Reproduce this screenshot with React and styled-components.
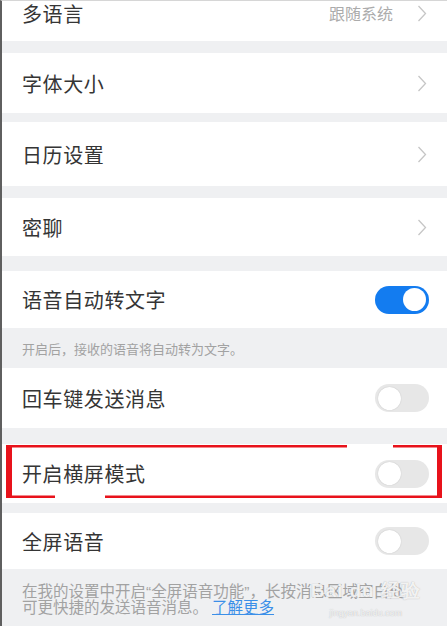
import React from 'react';
import styled, {createGlobalStyle} from 'styled-components';

const GlobalStyle = createGlobalStyle`
    html, body {
        margin: 0;
        padding: 0;
        background: #eff0f2;
    }
    * {
        box-sizing: border-box;
    }
`

const Screen = styled.div`
    width: 447px;
    height: 626px;
    overflow: hidden;
    background: #eff0f2;
    border-left: 2px solid #5f5f5f;
    border-top: 1px solid #d6d6d6;
    font-family: "Noto Sans CJK SC", "Noto Sans", sans-serif;
    display: flex;
    flex-direction: column;
`

const Row = styled.div`
    position: relative;
    flex: none;
    display: flex;
    align-items: center;
    justify-content: space-between;
    height: ${p => p.$h}px;
    margin-top: ${p => p.$gap || 0}px;
    padding: 0 18px 0 20px;
    background: #fff;
`

const Label = styled.span`
    font-size: 20px;
    letter-spacing: 0.6px;
    color: #353535;
`

const Side = styled.div`
    display: flex;
    align-items: center;
    gap: 24px;
    padding-right: 2px;
`

const Value = styled.span`
    font-size: 16px;
    color: #ababab;
`

const Hint = styled.div`
    flex: none;
    height: ${p => p.$h}px;
    display: flex;
    flex-direction: column;
    justify-content: ${p => p.$top ? 'flex-start' : 'center'};
    padding: ${p => p.$top ? '13px 20px 0' : '0 20px'};
    font-size: ${p => p.$size}px;
    color: #a2a2a2;
    position: relative;

    a {
        color: #3b8fe8;
        text-decoration: underline;
        margin-left: 4px;
    }
`

const Line = styled.div`
    height: 16px;
    line-height: 16px;
    white-space: nowrap;
`

const Quote = styled.span`
    font-family: "Liberation Sans", sans-serif;
`

const Toggle = styled.span`
    width: 54px;
    height: 28px;
    border-radius: 14px;
    background: ${p => p.$on ? '#137cf0' : '#e7e7e7'};
    display: flex;
    align-items: center;
    justify-content: ${p => p.$on ? 'flex-end' : 'flex-start'};
    padding: 0 3px;

    &::after {
        content: '';
        width: 23px;
        height: 23px;
        border-radius: 50%;
        background: #fff;
        box-shadow: ${p => p.$on ? 'none' : '0 0 1px rgba(0,0,0,0.25)'};
    }
`

const Mark = styled.svg`
    position: absolute;
    left: 4px;
    top: 1px;
    pointer-events: none;
`

const Watermark = styled.div`
    position: absolute;
    right: 26px;
    top: 9px;
    display: flex;
    flex-direction: column;
    align-items: center;
    color: rgba(255, 255, 255, 0.85);
    text-shadow: 0 0 1px rgba(120, 120, 120, 0.6);
    font-family: "Liberation Sans", sans-serif;

    b {
        font-size: 19px;
        font-weight: bold;
        letter-spacing: 1px;
    }
    small {
        font-size: 9px;
        margin-top: 4px;
    }
`

const Chevron = () => (
    <svg width="10" height="17" viewBox="0 0 10 17">
        <polyline points="1.5,1 8.5,8.5 1.5,16" fill="none" stroke="#c6c6c6" strokeWidth="1.3"/>
    </svg>
)

const rows = [
    {label: '多语言', h: 56, gap: -16, value: '跟随系统', arrow: true},
    {label: '字体大小', h: 60, gap: 12, arrow: true},
    {label: '日历设置', h: 64, gap: 9, arrow: true},
    {label: '密聊', h: 58, gap: 12, arrow: true},
]

export default function App() {
    return (
        <Screen>
            <GlobalStyle/>
            {rows.map(r => (
                <Row key={r.label} $h={r.h} $gap={r.gap}>
                    <Label>{r.label}</Label>
                    <Side>
                        {r.value && <Value>{r.value}</Value>}
                        <Chevron/>
                    </Side>
                </Row>
            ))}

            <Row $h={57} $gap={15}>
                <Label>语音自动转文字</Label>
                <Toggle $on/>
            </Row>
            <Hint $h={40} $size={13}>开启后，接收的语音将自动转为文字。</Hint>

            <Row $h={60}>
                <Label>回车键发送消息</Label>
                <Toggle/>
            </Row>

            <Row $h={59} $gap={16}>
                <Label>开启横屏模式</Label>
                <Toggle/>
                <Mark width="436" height="54" viewBox="0 0 436 54">
                    <g fill="#e8121b">
                        <rect x="0" y="0" width="6" height="53"/>
                        <rect x="6" y="0" width="335" height="2.5"/>
                        <rect x="387" y="0" width="49" height="2.5"/>
                        <rect x="431" y="0" width="5" height="53"/>
                        <rect x="0" y="50.5" width="49" height="2.5"/>
                        <rect x="99" y="50.5" width="337" height="2.5"/>
                    </g>
                </Mark>
            </Row>

            <Row $h={56} $gap={10}>
                <Label>全屏语音</Label>
                <Toggle/>
            </Row>
            <Hint $h={58} $size={15.5} $top>
                <Line>在我的设置中开启<Quote>“</Quote>全屏语音功能<Quote>”</Quote>，长按消息区域空白处</Line>
                <Line>可更快捷的发送语音消息。<a>了解更多</a></Line>
                <Watermark>
                    <b>Bai du 经验</b>
                    <small>jingyan.baidu.com</small>
                </Watermark>
            </Hint>
        </Screen>
    );
}
